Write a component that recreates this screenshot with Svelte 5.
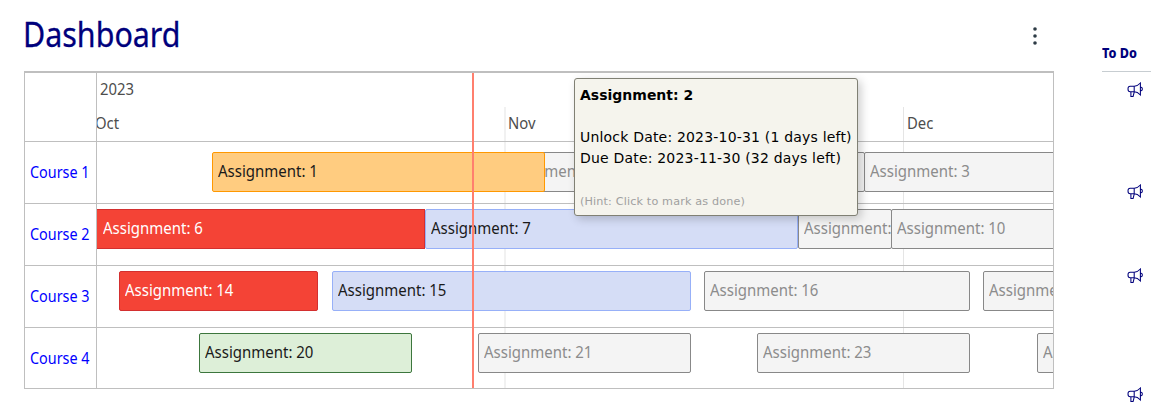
<script>
  const origin = 97;
  const courses = [
    {
      name: 'Course 1',
      items: [
        { n: 2, from: 491.5, to: 865, kind: 'upcoming' },
        { n: 1, from: 212, to: 545.3, kind: 'orange' },
        { n: 3, from: 864, to: 1120, kind: 'upcoming' }
      ]
    },
    {
      name: 'Course 2',
      items: [
        { n: 8, from: 797.7, to: 892, kind: 'upcoming' },
        { n: 6, from: 97, to: 425, kind: 'red', open: true },
        { n: 7, from: 424.7, to: 798, kind: 'blue' },
        { n: 10, from: 890.5, to: 1120, kind: 'upcoming' }
      ]
    },
    {
      name: 'Course 3',
      items: [
        { n: 14, from: 119, to: 318, kind: 'red' },
        { n: 15, from: 331.6, to: 691, kind: 'blue' },
        { n: 16, from: 704.3, to: 970.5, kind: 'upcoming' },
        { n: 17, from: 983.4, to: 1140, kind: 'upcoming' }
      ]
    },
    {
      name: 'Course 4',
      items: [
        { n: 20, from: 198.7, to: 412, kind: 'green' },
        { n: 21, from: 478.4, to: 691.4, kind: 'upcoming' },
        { n: 23, from: 757.4, to: 970.4, kind: 'upcoming' },
        { n: 25, from: 1036.6, to: 1240, kind: 'upcoming' }
      ]
    }
  ];
</script>

{#snippet horn()}
  <svg class="horn" width="16" height="16" viewBox="0 0 16 16" fill="none" stroke="#00007c" stroke-width="1.05">
    <path d="M7.2 4.2H3.2Q1 4.2 1 7t2.2 2.8h4zM7.2 4.2Q10.5 4.2 13.4 1v12Q10.5 9.8 7.2 9.8M3.9 10v4.5h2.2l1.1-4.4M13.5 5.1Q15.4 5.4 15.4 7t-1.9 1.9" />
  </svg>
{/snippet}

<div class="page">
  <main>
    <header>
      <h1>Dashboard</h1>
      <button aria-label="Options">
        <svg width="6" height="20" viewBox="0 0 6 20" fill="#2d3b45">
          <circle cx="3" cy="3" r="1.8" /><circle cx="3" cy="10" r="1.8" /><circle cx="3" cy="17" r="1.8" />
        </svg>
      </button>
    </header>

    <section class="timeline">
      <div class="labels">
        <div class="corner"></div>
        {#each courses as c}
          <div class="label"><a href="#course"><span class="narrow">{c.name}</span></a></div>
        {/each}
      </div>
      <div class="chart">
        <i class="month nov"></i>
        <i class="month dec"></i>
        <div class="axis">
          <span class="narrow tick year">2023</span>
          <span class="narrow tick oct">Oct</span>
          <span class="narrow tick novt">Nov</span>
          <span class="narrow tick dect">Dec</span>
        </div>
        {#each courses as c, i}
          <div class="row" class:first={i === 0}>
            {#each c.items as item}
              <div
                class="item {item.kind}"
                class:open={item.open}
                style="left:{item.from - origin}px;width:{item.to - item.from}px"
              >
                <span class="narrow">Assignment: {item.n}</span>
              </div>
            {/each}
          </div>
        {/each}
        <i class="now"></i>
      </div>
      <div class="tip">
        <b>Assignment: 2</b><br /><br />
        Unlock Date: 2023-10-31 (1 days left)<br />
        Due Date: 2023-11-30 (32 days left)<br /><br />
        <small>(Hint: Click to mark as done)</small>
      </div>
    </section>
  </main>

  <aside>
    <h2><span>To Do</span></h2>
    <ul>
      <li>{@render horn()}</li>
      <li>{@render horn()}</li>
      <li>{@render horn()}</li>
      <li>{@render horn()}</li>
    </ul>
  </aside>
</div>

<style>
  :global(body) {
    background: #fff;
    overflow: hidden;
  }
  .page {
    display: flex;
    gap: 48px;
    box-sizing: border-box;
    width: 1151px;
    height: 406px;
    padding-left: 24px;
    overflow: hidden;
    font: 400 16.5px/24px 'Noto Sans', sans-serif;
  }
  main {
    width: 1030px;
    flex: none;
  }
  header {
    display: flex;
    justify-content: space-between;
    height: 71px;
  }
  h1 {
    margin: 9px 0 0 -1px;
    font-size: 34.5px;
    line-height: 50px;
    font-weight: 400;
    color: #00007c;
    -webkit-text-stroke: 0.3px #00007c;
    transform: scaleX(0.882);
    transform-origin: 0 0;
  }
  button {
    border: 0;
    background: none;
    padding: 0;
    margin: 26px 16px 0 0;
    height: 20px;
  }
  button svg {
    display: block;
  }
  .narrow {
    display: inline-block;
    white-space: nowrap;
    transform: scaleX(0.9);
    transform-origin: 0 50%;
  }
  .timeline {
    position: relative;
    display: flex;
    box-sizing: border-box;
    height: 318px;
    border: 1px solid #bfbfbf;
    border-top-width: 2px;
  }
  .labels {
    width: 71px;
    flex: none;
    border-right: 1px solid #bfbfbf;
  }
  .corner {
    height: 68px;
    border-bottom: 1px solid #bfbfbf;
  }
  .label {
    box-sizing: border-box;
    height: 62px;
    border-bottom: 1px solid #bfbfbf;
    padding: 18px 0 0 5px;
  }
  .label:last-child {
    border-bottom: 0;
  }
  a {
    color: #00f;
    text-decoration: none;
    display: block;
    width: 60px;
  }
  a .narrow {
    transform: scaleX(0.87);
  }
  .chart {
    position: relative;
    flex: 1;
    overflow: hidden;
  }
  .axis {
    position: relative;
    height: 68px;
    border-bottom: 1px solid #bfbfbf;
    color: #4d4d4d;
  }
  .tick {
    position: absolute;
  }
  .year { left: 3px; top: 4px; }
  .oct { left: -2px; top: 38px; }
  .novt { left: 411px; top: 38px; }
  .dect { left: 810px; top: 38px; }
  .month {
    position: absolute;
    top: 34px;
    bottom: 0;
    width: 1px;
    background: #e5e5e5;
  }
  .nov {
    left: 407px;
    width: 2px;
    background: #f1f1f1;
  }
  .dec { left: 806px; }
  .row {
    position: relative;
    height: 61px;
    border-bottom: 1px solid #bfbfbf;
  }
  .item {
    position: absolute;
    box-sizing: border-box;
    top: 5px;
    height: 40px;
    border: 1px solid;
    border-radius: 2px;
    padding: 6px 0 0 5px;
    overflow: hidden;
    color: #1a1a1a;
  }
  .item .narrow {
    transform: scaleX(0.908);
  }
  .first .item { top: 10px; }
  .item.open { border-left: 0; border-radius: 0; padding-left: 6px; }
  .orange { background: #ffcc80; border-color: #ff9800; }
  .red { background: #f44336; border-color: #d32f2f; color: #fff; }
  .blue { background: #d5ddf6; border-color: #97b0f8; }
  .green { background: #ddefd8; border-color: #3c763d; }
  .item.upcoming { background: #f4f4f4; border-color: #888; color: #8c8c8c; }
  .now {
    position: absolute;
    left: 375px;
    top: 0;
    bottom: 0;
    width: 2px;
    background: #ff7f6e;
  }
  .tip {
    position: absolute;
    left: 549px;
    top: 5px;
    box-sizing: border-box;
    width: 284px;
    height: 138px;
    padding: 6px 5px;
    border: 1px solid #808074;
    border-radius: 3px;
    background: #f5f4ed;
    box-shadow: 3px 3px 10px rgba(0, 0, 0, 0.2);
    color: #000;
    font: 14px/21px 'DejaVu Sans', sans-serif;
    letter-spacing: 0.19px;
    white-space: nowrap;
  }
  b {
    letter-spacing: 0;
  }
  small {
    font-size: 11.2px;
    letter-spacing: 0.15px;
    color: #a0a0a0;
  }
  aside {
    width: 49px;
    flex: none;
  }
  h2 {
    margin: 0;
    height: 71px;
    border-bottom: 1px solid #c7cdd1;
    color: #00007c;
    font-size: 14px;
    font-weight: 800;
    line-height: 20px;
    white-space: nowrap;
  }
  h2 span {
    display: block;
    padding-top: 43px;
    transform: scaleX(0.9);
    transform-origin: 0 0;
  }
  ul {
    list-style: none;
    margin: 0;
    padding: 10px 0 0 25px;
  }
  li { height: 102px; }
  li:nth-child(2) { height: 84px; }
  li:nth-child(3) { height: 119px; }
  .horn { display: block; }
</style>
